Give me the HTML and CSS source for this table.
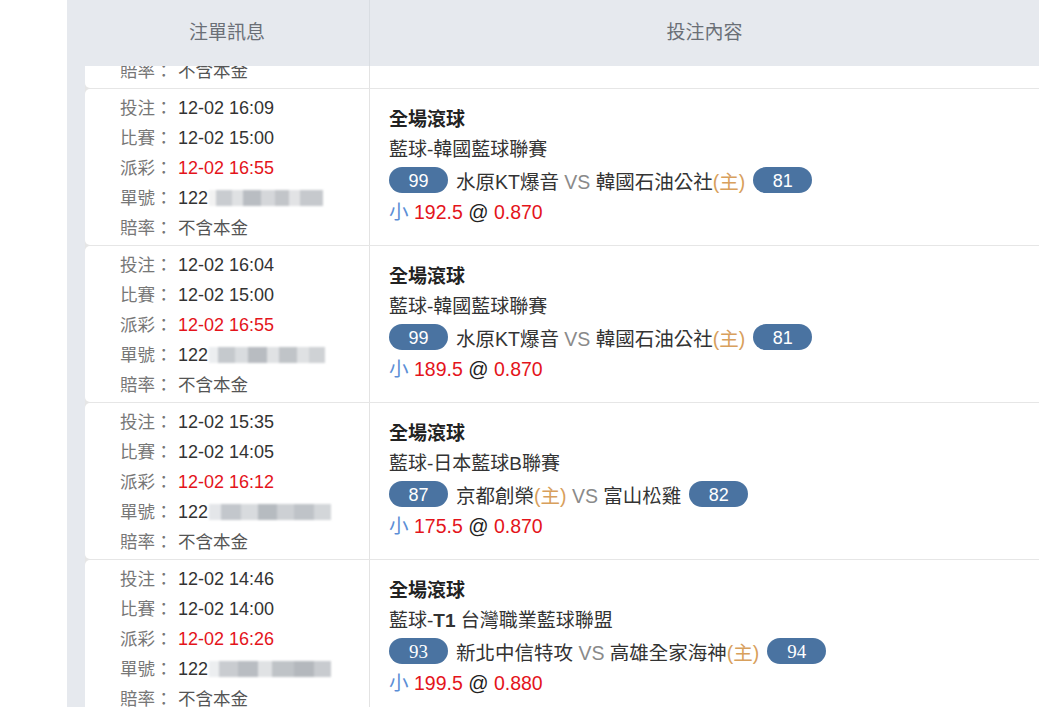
FILE: index.html
```html
<!DOCTYPE html>
<html lang="zh-Hant">
<head>
<meta charset="utf-8">
<title>注單</title>
<link rel="stylesheet" href="styles.css">
</head>
<body>
<div class="page">
  <div class="thead">
    <div class="th th-info">注單訊息</div>
    <div class="th th-content">投注內容</div>
  </div>
  <div class="tbody">
    <div class="rows">
      <div class="row">
        <div class="info">
          <div class="line"><span class="lbl">投注：</span><span class="val">12-02 16:20</span></div>
          <div class="line"><span class="lbl">比賽：</span><span class="val">12-02 15:00</span></div>
          <div class="line"><span class="lbl">派彩：</span><span class="val red">12-02 16:55</span></div>
          <div class="line"><span class="lbl">單號：</span><span class="val">122</span><span class="mosaic m1"></span></div>
          <div class="line"><span class="lbl">賠率：</span><span class="val plain">不含本金</span></div>
        </div>
        <div class="content"></div>
      </div>

      <div class="row">
        <div class="info">
          <div class="line"><span class="lbl">投注：</span><span class="val">12-02 16:09</span></div>
          <div class="line"><span class="lbl">比賽：</span><span class="val">12-02 15:00</span></div>
          <div class="line"><span class="lbl">派彩：</span><span class="val red">12-02 16:55</span></div>
          <div class="line"><span class="lbl">單號：</span><span class="val">122</span><span class="mosaic m1"></span></div>
          <div class="line"><span class="lbl">賠率：</span><span class="val plain">不含本金</span></div>
        </div>
        <div class="content">
          <div class="title">全場滾球</div>
          <div class="league">藍球-韓國藍球聯賽</div>
          <div class="teams"><span class="badge">99</span><span class="team">水原KT爆音 <span class="vs">VS</span> 韓國石油公社<span class="home">(主)</span></span><span class="badge">81</span></div>
          <div class="odds"><span class="side">小</span> <span class="red">192.5</span> <span class="at">@</span> <span class="red">0.870</span></div>
        </div>
      </div>

      <div class="row">
        <div class="info">
          <div class="line"><span class="lbl">投注：</span><span class="val">12-02 16:04</span></div>
          <div class="line"><span class="lbl">比賽：</span><span class="val">12-02 15:00</span></div>
          <div class="line"><span class="lbl">派彩：</span><span class="val red">12-02 16:55</span></div>
          <div class="line"><span class="lbl">單號：</span><span class="val">122</span><span class="mosaic m2"></span></div>
          <div class="line"><span class="lbl">賠率：</span><span class="val plain">不含本金</span></div>
        </div>
        <div class="content">
          <div class="title">全場滾球</div>
          <div class="league">藍球-韓國藍球聯賽</div>
          <div class="teams"><span class="badge">99</span><span class="team">水原KT爆音 <span class="vs">VS</span> 韓國石油公社<span class="home">(主)</span></span><span class="badge">81</span></div>
          <div class="odds"><span class="side">小</span> <span class="red">189.5</span> <span class="at">@</span> <span class="red">0.870</span></div>
        </div>
      </div>

      <div class="row">
        <div class="info">
          <div class="line"><span class="lbl">投注：</span><span class="val">12-02 15:35</span></div>
          <div class="line"><span class="lbl">比賽：</span><span class="val">12-02 14:05</span></div>
          <div class="line"><span class="lbl">派彩：</span><span class="val red">12-02 16:12</span></div>
          <div class="line"><span class="lbl">單號：</span><span class="val">122</span><span class="mosaic m3"></span></div>
          <div class="line"><span class="lbl">賠率：</span><span class="val plain">不含本金</span></div>
        </div>
        <div class="content">
          <div class="title">全場滾球</div>
          <div class="league">藍球-日本藍球B聯賽</div>
          <div class="teams"><span class="badge">87</span><span class="team">京都創榮<span class="home">(主)</span> <span class="vs">VS</span> 富山松雞</span><span class="badge">82</span></div>
          <div class="odds"><span class="side">小</span> <span class="red">175.5</span> <span class="at">@</span> <span class="red">0.870</span></div>
        </div>
      </div>

      <div class="row">
        <div class="info">
          <div class="line"><span class="lbl">投注：</span><span class="val">12-02 14:46</span></div>
          <div class="line"><span class="lbl">比賽：</span><span class="val">12-02 14:00</span></div>
          <div class="line"><span class="lbl">派彩：</span><span class="val red">12-02 16:26</span></div>
          <div class="line"><span class="lbl">單號：</span><span class="val">122</span><span class="mosaic m4"></span></div>
          <div class="line"><span class="lbl">賠率：</span><span class="val plain">不含本金</span></div>
        </div>
        <div class="content">
          <div class="title">全場滾球</div>
          <div class="league">藍球-<b>T1</b> 台灣職業藍球聯盟</div>
          <div class="teams"><span class="badge serif">93</span><span class="team">新北中信特攻 <span class="vs">VS</span> 高雄全家海神<span class="home">(主)</span></span><span class="badge serif">94</span></div>
          <div class="odds"><span class="side">小</span> <span class="red">199.5</span> <span class="at">@</span> <span class="red">0.880</span></div>
        </div>
      </div>
    </div>
  </div>
</div>
</body>
</html>
```

FILE: styles.css
```css
* { box-sizing: border-box; }
html, body { margin: 0; padding: 0; background: #ffffff; }
body {
  font-family: "Liberation Sans", "Noto Sans CJK TC", sans-serif;
  color: #333;
  overflow: hidden;
  height: 707px;
}
.page {
  margin-left: 67px;
  height: 707px;
  background: #e6e9ee;
  padding-left: 18px;
  overflow: hidden;
}
.thead {
  display: flex;
  height: 66px;
}
.th {
  display: flex;
  align-items: center;
  justify-content: center;
  padding-bottom: 6px;
  font-size: 19px;
  color: #6a6f76;
}
.th-info {
  width: 285px;
  border-right: 1px solid #d9dde2;
}
.th-content { flex: 1; }

.tbody {
  height: 641px;
  overflow: hidden;
}
.rows { margin-top: -134px; }
.row {
  display: flex;
  padding-bottom: 1px;
  background: #e6e6e6;
}
.info {
  width: 285px;
  background: #fff;
  border-radius: 5px 0 0 5px;
  border-right: 1px solid #e3e3e3;
  padding: 4px 0 2px 35px;
  font-size: 17.5px;
}
.line {
  height: 30px;
  line-height: 30px;
  display: flex;
  align-items: center;
  white-space: nowrap;
}
.lbl { color: #777; width: 58px; flex: none; }
.val { color: #333; font-size: 18px; }
.val.plain { color: #555; font-size: 17.5px; }
.red { color: #e4141b; }
.mosaic {
  display: inline-block;
  width: 116px;
  height: 16px;
  margin-left: 1px;
  filter: blur(1.2px);
}
.m1 { background: linear-gradient(90deg, #f2f2f2 0 6%, #c9ccd0 6% 20%, #dfe1e3 20% 30%, #b9bdc2 30% 46%, #d5d7da 46% 58%, #c2c5c9 58% 70%, #e2e3e5 70% 80%, #c6c9cd 80% 100%); width: 114px; }
.m2 { background: linear-gradient(90deg, #eceef0 0 8%, #c5c9cd 8% 22%, #d9dcdf 22% 34%, #b8bcc1 34% 50%, #e0e2e4 50% 60%, #c0c4c8 60% 76%, #dfe1e3 76% 86%, #cfd2d5 86% 100%); }
.m3 { background: linear-gradient(90deg, #e4e6e9 0 10%, #c3c7cc 10% 26%, #d8dbde 26% 40%, #b6bbc0 40% 56%, #cdd0d4 56% 70%, #bfc3c8 70% 86%, #d3d6d9 86% 100%); width: 122px; }
.m4 { background: linear-gradient(90deg, #eceef0 0 8%, #c9ccd0 8% 24%, #b9bdc2 24% 40%, #e0e2e4 40% 52%, #bfc3c7 52% 70%, #b4b8bd 70% 86%, #c8cbcf 86% 100%); width: 122px; }

.content {
  flex: 1;
  background: #fff;
  padding: 16px 0 0 19px;
  font-size: 19.5px;
  color: #333;
  height: 156px;
}
.title {
  height: 30px;
  line-height: 30px;
  font-weight: bold;
  font-size: 19px;
  color: #222;
}
.league {
  height: 30px;
  line-height: 30px;
  font-size: 19px;
  color: #333;
}
.league b { font-weight: bold; }
.teams {
  height: 30px;
  display: flex;
  align-items: center;
  white-space: nowrap;
}
.team { margin: 0 8px; color: #333; }
.vs { color: #8a8a8a; }
.home { color: #d8a05c; }
.badge {
  display: inline-flex;
  align-items: center;
  justify-content: center;
  width: 59px;
  height: 26px;
  border-radius: 13px;
  background: #4a73a1;
  color: #fff;
  font-size: 18px;
  padding-top: 2px;
}
.badge.serif { font-family: "Liberation Serif", serif; font-size: 19px; }
.odds {
  height: 34px;
  line-height: 34px;
  color: #222;
}
.at { font-size: 20px; }
.side { color: #5b8ed6; }
```
